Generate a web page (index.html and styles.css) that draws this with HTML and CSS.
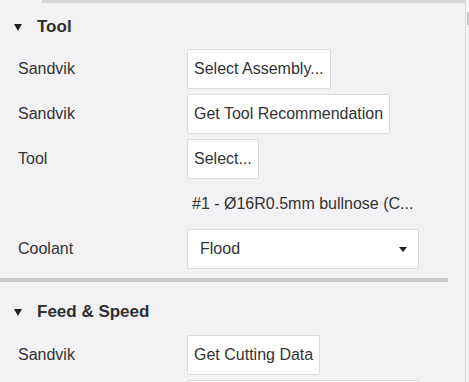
FILE: index.html
```html
<!DOCTYPE html>
<html lang="en">
<head>
  <meta charset="UTF-8" />
  <title>Tool Settings</title>
  <link rel="stylesheet" href="styles.css">
</head>
<body>
  <div class="window">
    <div class="panel">
      <div class="top-edge"></div>

      <div class="section first">
        <div class="section-head"><span class="caret"></span>Tool</div>
        <div class="rows">
          <div class="row">
            <span class="label">Sandvik</span>
            <button class="btn">Select Assembly...</button>
          </div>
          <div class="row">
            <span class="label">Sandvik</span>
            <button class="btn">Get Tool Recommendation</button>
          </div>
          <div class="row">
            <span class="label">Tool</span>
            <button class="btn">Select...</button>
          </div>
          <div class="row">
            <span class="label"></span>
            <span class="note">#1 - Ø16R0.5mm bullnose (C...</span>
          </div>
          <div class="row">
            <span class="label">Coolant</span>
            <div class="dropdown">Flood<span class="arrow"></span></div>
          </div>
        </div>
      </div>

      <div class="divider"></div>

      <div class="section second">
        <div class="section-head"><span class="caret"></span>Feed &amp; Speed</div>
        <div class="rows">
          <div class="row">
            <span class="label">Sandvik</span>
            <button class="btn">Get Cutting Data</button>
          </div>
          <div class="row">
            <span class="label"></span>
            <div class="dropdown">&nbsp;</div>
          </div>
        </div>
      </div>
    </div>
    <div class="scrollbar"><div class="thumb"></div></div>
  </div>
</body>
</html>
```

FILE: styles.css
```css
body {
  margin: 0;
  background: #f2f1f4;
  font-family: 'Liberation Sans', Arial, sans-serif;
  font-size: 16px;
  color: #333;
  overflow: hidden;
}

.window {
  display: flex;
  height: 382px;
  overflow: hidden;
}

.panel {
  width: 465px;
  border-right: 1px solid #dcdcdc;
}

.top-edge {
  height: 3px;
  margin-left: 42px;
  background: #d6d6d8;
}

.section-head {
  height: 40px;
  display: flex;
  align-items: center;
  padding-left: 14px;
  font-size: 17px;
  font-weight: bold;
  color: #2f2f33;
}

.first .section-head {
  margin-top: 4px;
}

.caret {
  width: 0;
  height: 0;
  border-left: 4px solid transparent;
  border-right: 4px solid transparent;
  border-top: 7px solid #222;
  margin-right: 15px;
}

.rows {
  display: flex;
  flex-direction: column;
  gap: 5px;
  padding-top: 2px;
}

.row {
  display: flex;
  align-items: center;
  height: 40px;
}

.label {
  width: 169px;
  padding-left: 18px;
  flex-shrink: 0;
}

.btn {
  height: 40px;
  padding: 0 6px;
  background: #fff;
  border: 1px solid #dadada;
  border-radius: 2px;
  font: inherit;
  color: #333;
}

.note {
  padding-left: 5px;
}

.dropdown {
  display: flex;
  align-items: center;
  padding-left: 12px;
  box-sizing: border-box;
  width: 232px;
  height: 40px;
  background: #fff;
  border: 1px solid #dadada;
  border-radius: 2px;
  position: relative;
}

.arrow {
  position: absolute;
  right: 11px;
  top: 17px;
  border-left: 4px solid transparent;
  border-right: 4px solid transparent;
  border-top: 5px solid #222;
}

.divider {
  height: 4px;
  width: 448px;
  margin-top: 9px;
  background: #cbcbcd;
}

.second .section-head {
  margin-top: 10px;
}

.second .rows {
  padding-top: 3px;
}

.scrollbar {
  flex: 1;
  background: #f4f4f5;
  padding-top: 12px;
}

.thumb {
  height: 13px;
  margin-left: 1px;
  background: #c9c9cb;
}
```
